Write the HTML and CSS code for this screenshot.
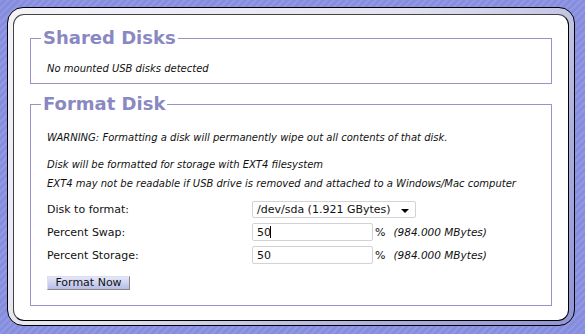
FILE: index.html
```html
<!DOCTYPE html>
<html lang="en">
<head>
    <meta charset="UTF-8">
    <title>Disk Management</title>
    <link rel="stylesheet" href="styles.css">
</head>
<body>
    <div class="frame">
        <div class="panel">
            <fieldset class="box">
                <legend>Shared Disks</legend>
                <p class="note">No mounted USB disks detected</p>
            </fieldset>

            <fieldset class="box format">
                <legend>Format Disk</legend>
                <p class="note">WARNING: Formatting a disk will permanently wipe out all contents of that disk.</p>
                <p class="note gap">Disk will be formatted for storage with EXT4 filesystem</p>
                <p class="note">EXT4 may not be readable if USB drive is removed and attached to a Windows/Mac computer</p>

                <div class="form">
                    <label for="disk">Disk to format:</label>
                    <div class="field">
                        <div class="select" id="disk">/dev/sda (1.921 GBytes)<span class="arrow"></span></div>
                    </div>

                    <label for="swap">Percent Swap:</label>
                    <div class="field">
                        <span class="input-wrap">
                            <input type="text" id="swap" value="50">
                            <span class="caret"></span>
                        </span>
                        <span class="pct">%</span>
                        <span class="size">(984.000 MBytes)</span>
                    </div>

                    <label for="storage">Percent Storage:</label>
                    <div class="field">
                        <input type="text" id="storage" value="50">
                        <span class="pct">%</span>
                        <span class="size">(984.000 MBytes)</span>
                    </div>
                </div>

                <button class="btn" type="button">Format Now</button>
            </fieldset>
        </div>
    </div>
</body>
</html>
```

FILE: styles.css
```css
:root {
    --bg: #8a92e4;
    --accent: #8a88c2;
    --line: #9694c8;
    --font: 'DejaVu Sans', Verdana, sans-serif;
}

* {
    box-sizing: border-box;
}

html, body {
    margin: 0;
    height: 100%;
}

body {
    font-family: var(--font);
    font-size: 11px;
    color: #111;
    background-color: var(--bg);
    background-image: repeating-linear-gradient(135deg, rgba(255,255,255,0.06) 0 2px, rgba(0,0,0,0.03) 2px 5px);
    padding: 7px 10px 8px 7px;
}

/* outer bevelled frame */
.frame {
    height: 100%;
    border: 1px solid #000;
    border-radius: 16px;
    padding: 6px 5px 4px 5px;
    background: linear-gradient(135deg, #f4f4f8 0%, #e2e3ee 45%, #a9acdc 80%, #8f94d4 100%);
}

.panel {
    height: 100%;
    background: #fff;
    border: 1px solid #000;
    border-top-color: #444;
    border-left-color: #444;
    border-radius: 11px;
    padding: 12px 16px 0 16px;
}

.box {
    border: 1px solid var(--line);
    margin: 0;
    padding: 10px 16px 5px 16px;
}

.box legend {
    font-size: 18px;
    font-weight: bold;
    line-height: 22px;
    color: var(--accent);
    padding: 0 2px;
    margin-left: -6px;
}

.format {
    margin-top: 9px;
    padding-top: 13px;
    padding-bottom: 15px;
}

.note {
    font-size: 10px;
    font-style: italic;
    margin: 0;
    line-height: 19px;
}

.gap {
    margin-top: 8px;
}

.form {
    display: grid;
    grid-template-columns: 205px auto;
    row-gap: 5px;
    align-items: center;
    margin-top: 8px;
}

.form label {
    line-height: 17px;
}

.field {
    display: flex;
    align-items: center;
}

.select {
    width: 164px;
    height: 17px;
    border: 1px solid #d2d2d8;
    border-radius: 2px;
    padding: 0 0 0 4px;
    line-height: 15px;
    position: relative;
    background: #fff;
}

.arrow {
    position: absolute;
    right: 6px;
    top: 7px;
    border-left: 4px solid transparent;
    border-right: 4px solid transparent;
    border-top: 4px solid #000;
}

.input-wrap {
    position: relative;
    display: inline-block;
}

input {
    font-family: var(--font);
    font-size: 11px;
    width: 121px;
    height: 18px;
    border: 1px solid #d2d2d8;
    border-radius: 2px;
    padding: 0 4px;
    margin: 0;
    color: #111;
    outline: none;
}

.caret {
    position: absolute;
    left: 18px;
    top: 3px;
    width: 1px;
    height: 12px;
    background: #000;
}

.pct {
    margin-left: 2px;
}

.size {
    font-size: 10.5px;
    font-style: italic;
    margin-left: 8px;
}

.btn {
    display: block;
    font-family: var(--font);
    font-size: 11px;
    color: #111;
    margin-top: 12px;
    width: 83px;
    height: 14px;
    padding: 0;
    line-height: 12px;
    border: 1px solid #888;
    border-top-color: #dde;
    border-left-color: #dde;
    background: linear-gradient(#e4e8fa, #b6bde8);
}
```
